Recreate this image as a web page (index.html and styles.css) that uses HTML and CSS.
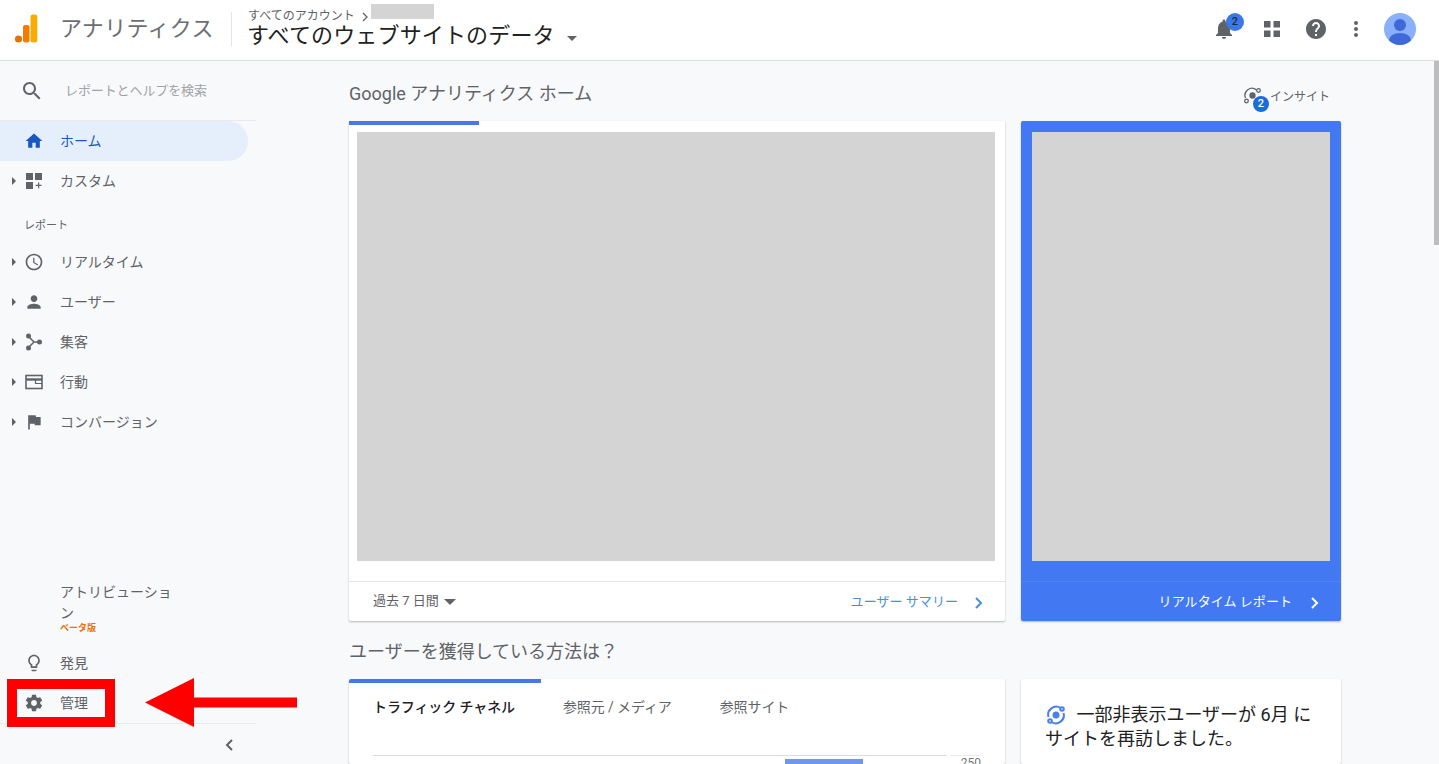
FILE: index.html
```html
<!DOCTYPE html>
<html lang="ja">
<head>
  <meta charset="UTF-8" />
  <title>Google アナリティクス</title>
  <link rel="stylesheet" href="styles.css">
</head>
<body>

  <!-- Top bar -->
  <header class="topbar">
    <svg class="logo" width="24" height="30" viewBox="0 0 24 30">
      <circle cx="4.5" cy="25" r="3.6" fill="#e37400"/>
      <rect x="9" y="11" width="6.5" height="17.6" rx="2" fill="#f57c00"/>
      <rect x="16.5" y="0.4" width="6.8" height="28.2" rx="2.4" fill="#f9ab00"/>
    </svg>
    <div class="brand">アナリティクス</div>
    <div class="view-picker">
      <div class="crumbs">すべてのアカウント<svg class="crumb-sep" width="6" height="10" viewBox="0 0 6 10" fill="none" stroke="#5f6368" stroke-width="1.300"><path d="m1 1 4 4-4 4"/></svg><span class="redacted"></span></div>
      <div class="view-name">すべてのウェブサイトのデータ<span class="caret"></span></div>
    </div>
    <div class="top-actions">
      <div class="bell">
        <svg width="24" height="24" viewBox="0 0 24 24" fill="#5f6368"><path d="M12 22c1.1 0 2-.9 2-2h-4c0 1.1.9 2 2 2zm6-6v-5c0-3.07-1.63-5.64-4.5-6.32V4c0-.83-.67-1.5-1.5-1.5s-1.5.67-1.5 1.5v.68C7.64 5.36 6 7.92 6 11v5l-2 2v1h16v-1l-2-2z"/></svg>
        <span class="bell-badge">2</span>
      </div>
      <svg class="apps" width="18" height="18" viewBox="0 0 18 18" fill="#5f6368"><rect x="1" y="1" width="6.5" height="6.5"/><rect x="10.500" y="1" width="6.500" height="6.500"/><rect x="1" y="10.500" width="6.500" height="6.500"/><rect x="10.500" y="10.500" width="6.500" height="6.500"/></svg>
      <svg class="help" width="24" height="24" viewBox="0 0 24 24" fill="#5f6368"><path d="M12 2C6.48 2 2 6.48 2 12s4.48 10 10 10 10-4.480 10-10S17.520 2 12 2zm1 17h-2v-2h2v2zm2.070-7.750-.9.920C13.450 12.900 13 13.500 13 15h-2v-.5c0-1.100.45-2.100 1.170-2.830l1.240-1.260c.37-.36.59-.86.59-1.410 0-1.100-.9-2-2-2s-2 .9-2 2H8c0-2.210 1.790-4 4-4s4 1.790 4 4c0 .88-.36 1.680-.93 2.250z"/></svg>
      <svg class="more" width="6" height="18" viewBox="0 0 6 18" fill="#5f6368"><circle cx="3" cy="3" r="2"/><circle cx="3" cy="9" r="2"/><circle cx="3" cy="15" r="2"/></svg>
      <svg class="avatar" width="32" height="32" viewBox="0 0 32 32">
        <defs><clipPath id="av"><circle cx="16" cy="16" r="16"/></clipPath></defs>
        <circle cx="16" cy="16" r="16" fill="#8ab0fb"/>
        <circle cx="16" cy="12" r="6" fill="#3f68d8"/>
        <ellipse cx="16" cy="27" rx="11" ry="7" fill="#3f68d8" clip-path="url(#av)"/>
      </svg>
    </div>
  </header>

  <div class="layout">

    <!-- Side navigation -->
    <nav class="sidebar">
      <div class="search-row">
        <svg width="24" height="24" viewBox="0 0 24 24" fill="#5f6368"><path d="M15.500 14h-.79l-.28-.27C15.410 12.590 16 11.110 16 9.500 16 5.910 13.090 3 9.500 3S3 5.910 3 9.500 5.910 16 9.500 16c1.610 0 3.090-.59 4.230-1.570l.27.28v.79l5 4.990L20.490 19l-4.990-5zm-6 0C7.010 14 5 11.990 5 9.500S7.010 5 9.500 5 14 7.010 14 9.500 11.990 14 9.500 14z"/></svg>
        <span class="search-hint">レポートとヘルプを検索</span>
      </div>

      <a class="nav-item active">
        <span class="nav-icon"><svg width="20" height="20" viewBox="0 0 24 24" fill="#1a56c4"><path d="M10 20v-6h4v6h5v-8h3L12 3 2 12h3v8z"/></svg></span>
        <span class="nav-text">ホーム</span>
      </a>
      <a class="nav-item has-arrow">
        <span class="nav-icon"><svg width="20" height="20" viewBox="0 0 20 20" fill="#5f6368"><rect x="2" y="2" width="7" height="7"/><rect x="11" y="2" width="7" height="7"/><rect x="2" y="11" width="7" height="7"/><path d="M14 11.500h1.200v2.300h2.300V15h-2.300v2.300H14V15h-2.300v-1.200H14z"/></svg></span>
        <span class="nav-text">カスタム</span>
      </a>

      <div class="nav-label">レポート</div>

      <a class="nav-item has-arrow">
        <span class="nav-icon"><svg width="20" height="20" viewBox="0 0 24 24" fill="#5f6368"><path d="M11.990 2C6.470 2 2 6.480 2 12s4.470 10 9.990 10C17.520 22 22 17.520 22 12S17.520 2 11.990 2zM12 20c-4.420 0-8-3.580-8-8s3.580-8 8-8 8 3.580 8 8-3.580 8-8 8zm.5-13H11v6l5.250 3.150.75-1.230-4.500-2.670z"/></svg></span>
        <span class="nav-text">リアルタイム</span>
      </a>
      <a class="nav-item has-arrow">
        <span class="nav-icon"><svg width="20" height="20" viewBox="0 0 24 24" fill="#5f6368"><path d="M12 12c2.210 0 4-1.790 4-4s-1.790-4-4-4-4 1.790-4 4 1.790 4 4 4zm0 2c-2.670 0-8 1.340-8 4v2h16v-2c0-2.660-5.330-4-8-4z"/></svg></span>
        <span class="nav-text">ユーザー</span>
      </a>
      <a class="nav-item has-arrow">
        <span class="nav-icon"><svg width="20" height="20" viewBox="0 0 20 20" fill="#5f6368"><path d="M4.500 4.500 10 10l-5.500 5.500M10 10h6" stroke="#5f6368" stroke-width="1.500" fill="none"/><circle cx="4.500" cy="4" r="2.500"/><circle cx="4.500" cy="16" r="2.500"/><circle cx="15.500" cy="10" r="2.500"/></svg></span>
        <span class="nav-text">集客</span>
      </a>
      <a class="nav-item has-arrow">
        <span class="nav-icon"><svg width="20" height="20" viewBox="0 0 20 20" fill="none" stroke="#5f6368"><rect x="2" y="3.500" width="16" height="13" stroke-width="1.600"/><path d="M2 7.500h16" stroke-width="2.400"/><path d="M11.500 8v3.500H18" stroke-width="1.200"/></svg></span>
        <span class="nav-text">行動</span>
      </a>
      <a class="nav-item has-arrow">
        <span class="nav-icon"><svg width="20" height="20" viewBox="0 0 24 24" fill="#5f6368"><path d="M14.400 6 14 4H5v17h2v-7h5.600l.4 2h7V6z"/></svg></span>
        <span class="nav-text">コンバージョン</span>
      </a>

      <div class="side-bottom">
        <a class="nav-item attribution">
          <span class="nav-icon"></span>
          <span class="attr-text">アトリビューション<em class="beta">ベータ版</em></span>
        </a>
        <a class="nav-item">
          <span class="nav-icon"><svg width="20" height="20" viewBox="0 0 24 24" fill="#5f6368"><path d="M9 21c0 .55.45 1 1 1h4c.55 0 1-.45 1-1v-1H9v1zm3-19C8.140 2 5 5.140 5 9c0 2.380 1.190 4.470 3 5.740V17c0 .55.45 1 1 1h6c.55 0 1-.45 1-1v-2.260c1.810-1.270 3-3.360 3-5.740 0-3.860-3.140-7-7-7zm2.850 11.100-.85.600V16h-4v-2.300l-.85-.6C7.800 12.160 7 10.630 7 9c0-2.760 2.240-5 5-5s5 2.240 5 5c0 1.630-.8 3.160-2.150 4.100z"/></svg></span>
          <span class="nav-text">発見</span>
        </a>
        <a class="nav-item">
          <span class="nav-icon"><svg width="20" height="20" viewBox="0 0 24 24" fill="#5f6368"><path d="M19.430 12.980c.04-.32.07-.64.07-.98s-.03-.66-.07-.98l2.110-1.650c.19-.15.24-.42.120-.64l-2-3.460c-.12-.22-.39-.3-.61-.22l-2.490 1c-.52-.4-1.080-.73-1.690-.98l-.38-2.650C14.460 2.180 14.250 2 14 2h-4c-.25 0-.46.18-.49.42l-.38 2.650c-.61.25-1.170.59-1.690.98l-2.490-1c-.23-.09-.49 0-.61.22l-2 3.460c-.13.22-.07.49.12.64l2.110 1.650c-.04.32-.07.65-.07.98s.03.66.07.98l-2.110 1.650c-.19.15-.24.42-.12.64l2 3.460c.12.22.39.3.61.22l2.490-1c.52.4 1.080.73 1.690.98l.38 2.650c.03.24.24.42.49.42h4c.25 0 .46-.18.49-.42l.38-2.650c.61-.25 1.170-.59 1.690-.98l2.490 1c.23.09.49 0 .61-.22l2-3.460c.12-.22.07-.49-.12-.64l-2.110-1.650zM12 15.500c-1.930 0-3.500-1.570-3.500-3.500s1.570-3.500 3.500-3.500 3.500 1.570 3.500 3.500-1.570 3.500-3.500 3.500z"/></svg></span>
          <span class="nav-text">管理</span>
        </a>
        <div class="collapse-row">
          <svg width="10" height="14" viewBox="0 0 10 14" fill="none" stroke="#5f6368" stroke-width="2"><path d="M8 2 3 7l5 5"/></svg>
        </div>
      </div>
    </nav>

    <!-- Main content -->
    <main class="content">
      <div class="page-head">
        <h1 class="page-title">Google アナリティクス ホーム</h1>
        <div class="insights">
          <span class="insights-icon">
            <svg width="20" height="20" viewBox="0 0 20 20" fill="none" stroke="#5f6368" stroke-width="1.300"><path d="M2.500 12a7 7 0 0 1 11-8"/><circle cx="15.500" cy="4.500" r="1.800"/><circle cx="3.500" cy="15" r="1.800"/><circle cx="9.500" cy="9.500" r="2.500" fill="#5f6368"/></svg>
            <span class="insights-badge">2</span>
          </span>
          <span>インサイト</span>
        </div>
      </div>

      <div class="card-row top-row">
        <section class="card">
          <div class="tab-line short"></div>
          <div class="placeholder main-ph"></div>
          <div class="card-foot">
            <span class="range">過去 7 日間<span class="range-caret"></span></span>
            <span class="foot-link">ユーザー サマリー
              <svg width="10" height="14" viewBox="0 0 10 14" fill="none" stroke="#4a90d9" stroke-width="2"><path d="m2 2 5 5-5 5"/></svg>
            </span>
          </div>
        </section>
        <section class="card blue-card">
          <div class="placeholder side-ph"></div>
          <div class="card-foot blue-foot">
            <span class="foot-link white">リアルタイム レポート
              <svg width="10" height="14" viewBox="0 0 10 14" fill="none" stroke="#fff" stroke-width="2"><path d="m2 2 5 5-5 5"/></svg>
            </span>
          </div>
        </section>
      </div>

      <h2 class="section-title">ユーザーを獲得している方法は？</h2>

      <div class="card-row">
        <section class="card low-card">
          <div class="tab-line wide"></div>
          <div class="tabs">
            <span class="tab selected">トラフィック チャネル</span>
            <span class="tab">参照元 / メディア</span>
            <span class="tab">参照サイト</span>
          </div>
          <div class="chart">
            <div class="chart-plot"><div class="chart-bar"></div></div>
            <span class="chart-tick">250</span>
          </div>
        </section>
        <section class="card low-card note-card">
          <p class="note">
            <svg width="22" height="22" viewBox="0 0 22 22" fill="none" stroke="#4a80e8" stroke-width="2"><path d="M3.500 13a8 8 0 0 1 12-9M18.500 9a8 8 0 0 1-12 9"/><circle cx="17" cy="5" r="1.800"/><circle cx="5" cy="17" r="1.800"/><circle cx="11" cy="11" r="3.500" fill="#4a80e8" stroke="none"/></svg>
            一部非表示ユーザーが 6月 に<br>サイトを再訪しました。
          </p>
        </section>
      </div>
    </main>
  </div>

  <div class="scroll-thumb"></div>

  <!-- Red annotation over the admin link -->
  <div class="mark-box"></div>
  <svg class="mark-arrow" width="152" height="49" viewBox="0 0 152 49" fill="#f00"><path d="M0 24.500 49 0v19.500h103v10H49V49z"/></svg>

</body>
</html>
```

FILE: styles.css
```css
* {
  box-sizing: border-box;
  margin: 0;
  padding: 0;
}

html, body {
  height: 100%;
  overflow: hidden;
}

body {
  background: #f8f9fa;
  color: #5f6368;
  font-family: Roboto, "Noto Sans CJK JP", sans-serif;
  font-size: 14px;
  display: flex;
  flex-direction: column;
  position: relative;
}

/* top bar */
.topbar {
  height: 61px;
  flex: none;
  background: #fff;
  border-bottom: 1px solid #dadce0;
  display: flex;
  align-items: center;
  padding-left: 14px;
}

.logo {
  margin-bottom: 3px;
}

.brand {
  font-size: 22px;
  letter-spacing: 0.3px;
  margin-left: 22px;
  width: 171px;
  color: #6b6f73;
  white-space: nowrap;
  margin-bottom: 8px;
}

.view-picker {
  height: 34px;
  border-left: 1px solid #e3e4e6;
  padding-left: 17px;
  position: relative;
  margin-bottom: 3px;
}

.crumbs {
  font-size: 12px;
  line-height: 14px;
  display: flex;
  margin-top: -3px;
  margin-left: -1px;
  white-space: pre;
}

.crumb-sep {
  margin: 3px 3px 0 7px;
}

.redacted {
  width: 63px;
  height: 15px;
  background: #d4d4d4;
  margin-top: -5px;
}

.view-name {
  font-size: 22px;
  line-height: 30px;
  letter-spacing: 0.15px;
  margin-top: -2px;
  margin-left: -2px;
  color: #212121;
  display: flex;
  align-items: center;
  white-space: nowrap;
}

.caret {
  width: 0;
  height: 0;
  border-left: 5.5px solid transparent;
  border-right: 5.5px solid transparent;
  border-top: 5.5px solid #5f6368;
  margin: 6px 0 0 12px;
}

.top-actions {
  margin-left: auto;
  display: flex;
  align-items: center;
  margin-right: 23px;
  margin-bottom: 2px;
}

.bell {
  position: relative;
  height: 24px;
  margin-right: 27px;
}

.bell-badge {
  position: absolute;
  left: 14px;
  top: -4px;
  width: 18px;
  height: 18px;
  border-radius: 50%;
  background: #3b78e7;
  color: #1b2a4a;
  font-size: 11px;
  font-weight: 500;
  line-height: 18px;
  text-align: center;
}

.apps {
  margin-right: 23px;
}

.help {
  margin-right: 25px;
}

.more {
  margin-right: 25px;
}

/* layout */
.layout {
  flex: 1;
  min-height: 0;
  display: flex;
}

.sidebar {
  width: 256px;
  flex: none;
  display: flex;
  flex-direction: column;
}

.search-row {
  height: 60px;
  flex: none;
  display: flex;
  align-items: center;
  padding-left: 20px;
  border-bottom: 1px solid #e8eaed;
}

.search-hint {
  font-size: 13px;
  letter-spacing: -0.1px;
  color: #a0a3a7;
  margin: -2px 0 0 21px;
}

.nav-item {
  height: 40px;
  flex: none;
  width: 248px;
  display: flex;
  align-items: center;
  position: relative;
  padding-left: 24px;
  font-size: 14px;
  border-radius: 0 20px 20px 0;
}

.nav-item.active {
  background: #e5eefb;
  color: #1a56c4;
}

.nav-icon {
  width: 20px;
  height: 20px;
  margin-right: 16px;
  flex: none;
}

.nav-icon svg {
  display: block;
}

.nav-text {
  margin-top: -2px;
}

.has-arrow::before {
  content: '';
  position: absolute;
  left: 12px;
  top: 16px;
  border-top: 4px solid transparent;
  border-bottom: 4px solid transparent;
  border-left: 4px solid #5f6368;
}

.nav-label {
  height: 41px;
  flex: none;
  padding: 17px 0 0 24px;
  font-size: 11px;
  line-height: 16px;
}

.side-bottom {
  margin-top: auto;
}

.attribution {
  height: 60px;
  align-items: flex-start;
}

.attr-text {
  width: 118px;
  line-height: 21px;
  position: relative;
  margin-top: -1px;
}

.beta {
  display: block;
  font-style: normal;
  font-weight: 700;
  font-size: 9px;
  line-height: 9px;
  color: #e8710a;
  margin-top: 0;
}

.collapse-row {
  height: 41px;
  border-top: 1px solid #e8eaed;
  display: flex;
  align-items: center;
  justify-content: flex-end;
  padding: 2px 22px 0 0;
}

/* main */
.content {
  flex: 1;
  min-width: 0;
  padding-left: 93px;
  padding-right: 98px;
}

.page-head {
  height: 60px;
  display: flex;
  align-items: center;
  justify-content: space-between;
  padding-right: 11px;
}

.page-title {
  font-size: 18px;
  font-weight: 400;
  margin-top: 2px;
}

.insights {
  display: flex;
  align-items: center;
  font-size: 12px;
  color: #5f6368;
  gap: 7px;
  margin-top: 8px;
}

.insights-icon {
  position: relative;
  width: 20px;
  height: 20px;
  margin-top: 2px;
}

.insights-badge {
  position: absolute;
  left: 10px;
  top: 10px;
  width: 16px;
  height: 16px;
  border-radius: 50%;
  background: #1a6be0;
  color: #fff;
  font-size: 11px;
  font-weight: 500;
  line-height: 16px;
  text-align: center;
}

.card-row {
  display: grid;
  grid-template-columns: 656px 320px;
  gap: 16px;
}

.top-row {
  height: 500px;
}

.card {
  background: #fff;
  border-radius: 2px;
  box-shadow: 0 1px 2px rgba(60, 64, 67, 0.35);
  display: flex;
  flex-direction: column;
  position: relative;
}

.tab-line {
  height: 4px;
  background: #4779e4;
  flex: none;
}

.tab-line.short {
  width: 130px;
}

.tab-line.wide {
  width: 192px;
}

.placeholder {
  background: #d4d4d4;
}

.main-ph {
  height: 429px;
  margin: 7px 10px 0 8px;
}

.blue-card {
  background: #4279f2;
}

.side-ph {
  height: 429px;
  margin: 11px 11px 0 11px;
}

.card-foot {
  margin-top: 20px;
  height: 40px;
  border-top: 1px solid #e3e4e6;
  display: flex;
  align-items: center;
  justify-content: space-between;
  padding: 0 21px 0 24px;
  flex: none;
}

.blue-foot {
  border-top-color: #4f82f3;
  justify-content: flex-end;
}

.range {
  font-size: 13px;
  display: flex;
  align-items: center;
  margin-top: -5px;
}

.range-caret {
  border-left: 6px solid transparent;
  border-right: 6px solid transparent;
  border-top: 6px solid #5f6368;
  margin: 5px 0 0 5px;
}

.foot-link {
  font-size: 13px;
  letter-spacing: 0.05px;
  color: #4a90d9;
  display: flex;
  align-items: center;
  gap: 16px;
  line-height: 14px;
}

.foot-link svg {
  margin-top: 2px;
}

.foot-link.white {
  color: #fff;
  gap: 18px;
}

.section-title {
  font-size: 18px;
  font-weight: 400;
  height: 58px;
  line-height: 62px;
}

.low-card {
  height: 85px;
  overflow: hidden;
}

.tabs {
  display: flex;
  gap: 48px;
  padding: 15px 0 0 24px;
  font-size: 14px;
  line-height: 18px;
}

.tab {
  letter-spacing: -0.1px;
}

.tab.selected {
  color: #212121;
  font-weight: 500;
}

.chart {
  margin: 39px 0 0 24px;
  display: flex;
  gap: 3px;
}

.chart-plot {
  width: 574px;
  height: 9px;
  border-top: 1px solid #dadce0;
  padding-left: 412px;
}

.chart-bar {
  width: 78px;
  height: 6px;
  margin-top: 3px;
  background: #6f97ee;
}

.chart-tick {
  width: 31px;
  height: 20px;
  border-top: 1px solid #e8eaed;
  font-size: 12px;
  line-height: 14px;
  text-align: right;
  color: #757575;
}

.note-card {
  padding: 24px 24px 0;
}

.note {
  font-size: 18px;
  line-height: 24px;
  color: #212121;
}

.note svg {
  vertical-align: -5px;
  margin-right: 5px;
}

/* browser scrollbar thumb */
.scroll-thumb {
  position: absolute;
  right: 0;
  top: 61px;
  width: 5px;
  height: 184px;
  background: #bdbdbd;
}

/* annotation */
.mark-box {
  position: absolute;
  left: 7px;
  top: 679px;
  width: 108px;
  height: 48px;
  border: 10px solid #f00;
}

.mark-arrow {
  position: absolute;
  left: 145px;
  top: 678px;
}
```
